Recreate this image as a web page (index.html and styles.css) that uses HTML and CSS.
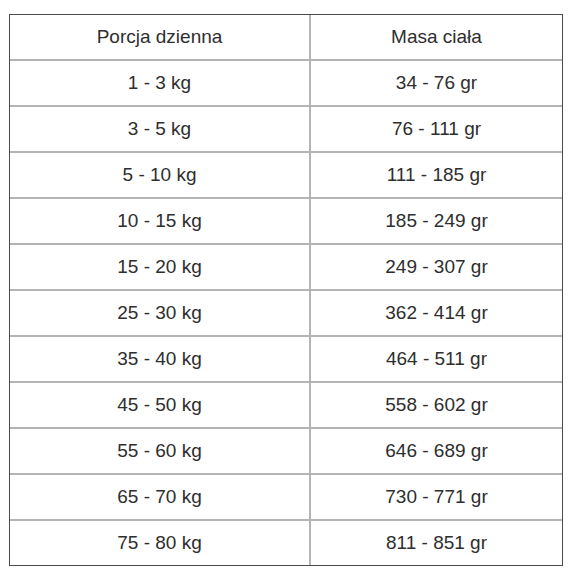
FILE: index.html
```html
<!DOCTYPE html>
<html lang="pl">
<head>
<meta charset="utf-8">
<link rel="stylesheet" href="styles.css">
</head>
<body>
<table class="dose">
  <thead>
    <tr><th>Porcja dzienna</th><th>Masa ciała</th></tr>
  </thead>
  <tbody>
    <tr><td>1 - 3 kg</td><td>34 - 76 gr</td></tr>
    <tr><td>3 - 5 kg</td><td>76 - 111 gr</td></tr>
    <tr><td>5 - 10 kg</td><td>111 - 185 gr</td></tr>
    <tr><td>10 - 15 kg</td><td>185 - 249 gr</td></tr>
    <tr><td>15 - 20 kg</td><td>249 - 307 gr</td></tr>
    <tr><td>25 - 30 kg</td><td>362 - 414 gr</td></tr>
    <tr><td>35 - 40 kg</td><td>464 - 511 gr</td></tr>
    <tr><td>45 - 50 kg</td><td>558 - 602 gr</td></tr>
    <tr><td>55 - 60 kg</td><td>646 - 689 gr</td></tr>
    <tr><td>65 - 70 kg</td><td>730 - 771 gr</td></tr>
    <tr><td>75 - 80 kg</td><td>811 - 851 gr</td></tr>
  </tbody>
</table>
</body>
</html>
```
FILE: styles.css
```css
html, body {
  margin: 0;
  padding: 0;
  background: #ffffff;
}
body {
  padding: 14px 0 0 9px;
  font-family: "Liberation Sans", Arial, sans-serif;
  color: #2e2e2e;
}
.dose {
  border-collapse: separate;
  border-spacing: 0;
  border: 1px solid #4a4a4a;
  width: 554px;
  height: 550px;
  table-layout: fixed;
}
.dose th,
.dose td {
  font-weight: normal;
  font-size: 19px;
  text-align: center;
  vertical-align: middle;
  padding: 0;
  height: 44px;
  border-bottom: 2px solid #b4b4b4;
  border-right: 2px solid #b4b4b4;
}
.dose th:first-child,
.dose td:first-child {
  width: 299px;
}
.dose th:last-child,
.dose td:last-child {
  border-right: none;
}
.dose tbody tr:last-child td {
  border-bottom: none;
}
```
